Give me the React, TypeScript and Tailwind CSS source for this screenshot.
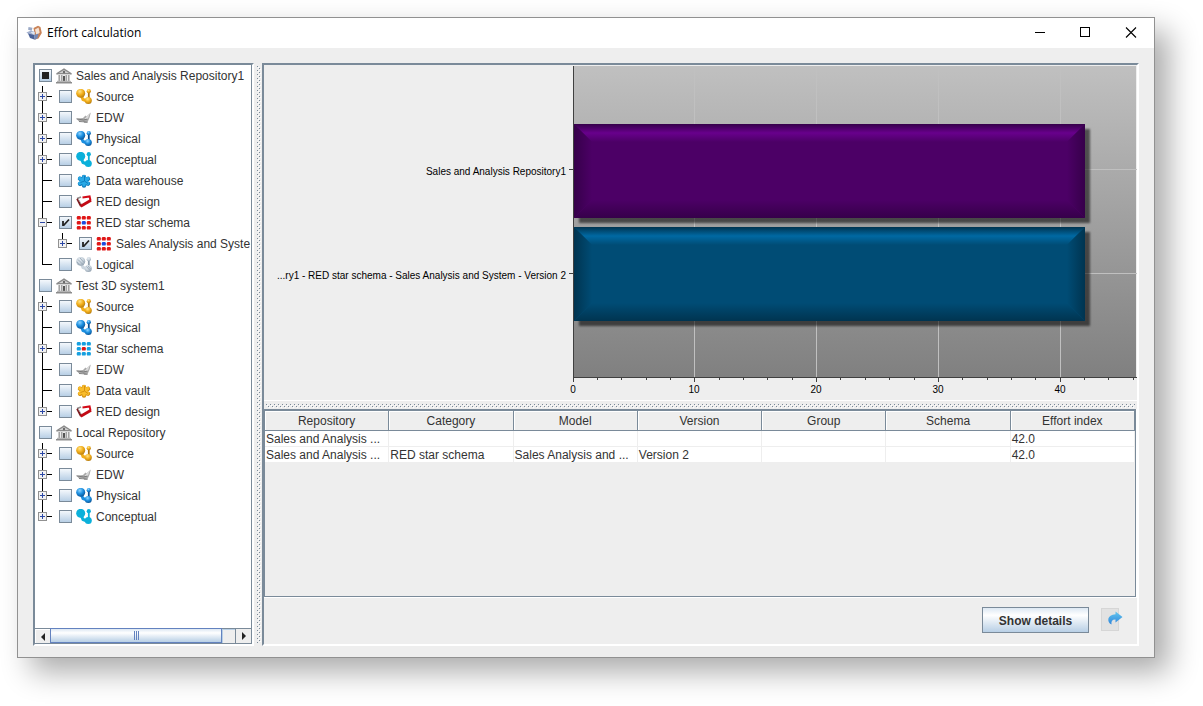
import { useId, useState } from "react";
import type { ReactNode } from "react";

type IconName =
  | "repository"
  | "source"
  | "edw"
  | "physical"
  | "conceptual"
  | "logical"
  | "warehouse"
  | "vault"
  | "red"
  | "redStar"
  | "star";

type TreeRow = {
  label: string;
  icon: IconName;
  level: number;
  expander?: "plus" | "minus";
  last?: boolean;
  state?: "checked" | "partial";
};

const tree: TreeRow[] = [
  { label: "Sales and Analysis Repository1", icon: "repository", level: 0, state: "partial" },
  { label: "Source", icon: "source", level: 1, expander: "plus" },
  { label: "EDW", icon: "edw", level: 1, expander: "plus" },
  { label: "Physical", icon: "physical", level: 1, expander: "plus" },
  { label: "Conceptual", icon: "conceptual", level: 1, expander: "plus" },
  { label: "Data warehouse", icon: "warehouse", level: 1 },
  { label: "RED design", icon: "red", level: 1 },
  { label: "RED star schema", icon: "redStar", level: 1, expander: "minus", state: "checked" },
  { label: "Sales Analysis and Syste", icon: "redStar", level: 2, expander: "plus", last: true, state: "checked" },
  { label: "Logical", icon: "logical", level: 1, last: true },
  { label: "Test 3D system1", icon: "repository", level: 0 },
  { label: "Source", icon: "source", level: 1, expander: "plus" },
  { label: "Physical", icon: "physical", level: 1 },
  { label: "Star schema", icon: "star", level: 1, expander: "plus" },
  { label: "EDW", icon: "edw", level: 1 },
  { label: "Data vault", icon: "vault", level: 1 },
  { label: "RED design", icon: "red", level: 1, expander: "plus", last: true },
  { label: "Local Repository", icon: "repository", level: 0 },
  { label: "Source", icon: "source", level: 1, expander: "plus" },
  { label: "EDW", icon: "edw", level: 1, expander: "plus" },
  { label: "Physical", icon: "physical", level: 1, expander: "plus" },
  { label: "Conceptual", icon: "conceptual", level: 1, expander: "plus", last: true },
];

const columns = ["Repository", "Category", "Model", "Version", "Group", "Schema", "Effort index"];

const rows = [
  ["Sales and Analysis ...", "", "", "", "", "", "42.0"],
  ["Sales and Analysis ...", "RED star schema", "Sales Analysis and ...", "Version 2", "", "", "42.0"],
];

function Molecule({ light, main, dark }: { light: string; main: string; dark: string }) {
  const id = useId();
  return (
    <>
      <defs>
        <radialGradient id={id} cx="0.4" cy="0.3" r="0.75">
          <stop offset="0" stopColor={light} />
          <stop offset="0.5" stopColor={main} />
          <stop offset="1" stopColor={dark} />
        </radialGradient>
      </defs>
      <path d="M5 6l2 4.500 4 1.500" stroke={main} strokeWidth="3" fill="none" />
      <path d="M12.800 2v8" stroke={dark} strokeWidth="1.800" />
      <circle cx="4.700" cy="4.300" r="4.500" fill={`url(#${id})`} />
      <circle cx="12.800" cy="2.200" r="2.100" fill={`url(#${id})`} />
      <circle cx="12.300" cy="11.500" r="3.500" fill={`url(#${id})`} />
    </>
  );
}

function Flower({ main, dark }: { main: string; dark: string }) {
  return (
    <>
      <g stroke={dark} strokeWidth="4.4" strokeLinecap="round">
        <path d="M8 4v8.500M4 5.700l8 5M4 10.800l8-5" />
      </g>
      <g stroke={main} strokeWidth="3.400" strokeLinecap="round">
        <path d="M8 3.600v8.200M3.800 5.400l8 4.800M3.800 10.300l8-4.800" />
      </g>
      <path d="M8.500 3v5l-4 1.500M8.500 8l3.500 2.500" stroke={dark} strokeWidth="0.9" fill="none" />
    </>
  );
}

function DotGrid({ outer, center }: { outer: string; center: string }) {
  const steps = [2.8, 7.8, 12.8];
  return (
    <>
      {steps.map((y) =>
        steps.map((x) => (
          <rect
            key={`${x}-${y}`}
            x={x - 2}
            y={y - 1.8}
            width="4"
            height="3.6"
            rx="1.2"
            fill={x === 7.8 && y === 7.8 ? center : outer}
          />
        ))
      )}
    </>
  );
}

function TreeIcon({ name }: { name: IconName }) {
  let drawing: ReactNode = null;
  switch (name) {
    case "repository":
      drawing = (
        <>
          <path d="M0.300 5.200L8 0.300l7.700 4.900v1.300H0.300z" fill="#8a8a8a" />
          <path d="M3 5L8 2 13 5z" fill="#d2d2d2" />
          <circle cx="8" cy="4" r="1.200" fill="#6a6a6a" />
          <path d="M2 6.500h12v6.500H2z" fill="#ececec" />
          <path d="M3.200 7v6M5.800 7v6M10.200 7v6M12.800 7v6" stroke="#8a8a8a" strokeWidth="1.100" />
          <path d="M7 8h2v5H7z" fill="#555" />
          <path d="M1 12.800h14v1.200H1z" fill="#b5b5b5" />
          <path d="M0 14h16v1.500H0z" fill="#8c8c8c" />
        </>
      );
      break;
    case "source":
      drawing = <Molecule light="#ffe48a" main="#f2ae1a" dark="#b0770e" />;
      break;
    case "physical":
      drawing = <Molecule light="#8fd4ff" main="#1b8fe0" dark="#0a4f90" />;
      break;
    case "conceptual":
      drawing = <Molecule light="#0bb0da" main="#0bb0da" dark="#0bb0da" />;
      break;
    case "logical":
      drawing = (
        <>
          <Molecule light="#e4ebf1" main="#cbd5de" dark="#8f9eac" />
          <path d="M2 2.500l5 5M4 1l4 4.500M1 5l2.500 3M10.500 9.500l3.500 4M12 9l2.500 3" stroke="#8fa0af" strokeWidth="0.800" />
        </>
      );
      break;
    case "edw":
      drawing = (
        <>
          <path d="M0.500 8.800L7 8 9.500 5.500 10.500 6.500 14.800 2.400 13.600 7.500 11.500 12.300 8.500 13 7 11 3 11.500z" fill="#a9a9a9" />
          <path d="M8.500 9l5.500-6-2.200 6z" fill="#dcdcdc" />
          <path d="M0.500 8.800l7 1.200 4-1M3 11.500l5 .3 3.500 .6" stroke="#767676" strokeWidth="0.900" fill="none" />
        </>
      );
      break;
    case "warehouse":
      drawing = <Flower main="#2aa9e6" dark="#0c78b8" />;
      break;
    case "vault":
      drawing = <Flower main="#f9bd2c" dark="#d08c0e" />;
      break;
    case "red":
      drawing = (
        <>
          <path d="M1 4.500L5 3" stroke="#8d8d8d" strokeWidth="1.600" />
          <path d="M1.200 4.800L5 12.300" stroke="#7d1a1f" strokeWidth="2" />
          <path d="M2.200 5L5.800 10.500" stroke="#b5b5b5" strokeWidth="0.900" />
          <path d="M4.700 12.200L15 6.200" stroke="#c20914" strokeWidth="2.800" />
          <path d="M14.500 6.400L13.600 2.400 6.500 3.400" stroke="#d30b18" strokeWidth="2" fill="none" />
        </>
      );
      break;
    case "redStar":
      drawing = <DotGrid outer="#e01818" center="#1c4be0" />;
      break;
    case "star":
      drawing = <DotGrid outer="#16a0e0" center="#e01818" />;
      break;
  }
  return (
    <svg viewBox="0 0 16 16" className="size-4 shrink-0" fill="none" aria-hidden="true">
      {drawing}
    </svg>
  );
}

function Guide({ row }: { row: TreeRow }) {
  return (
    <svg viewBox="0 0 20 21" className="block h-[21px] w-5" shapeRendering="crispEdges" aria-hidden="true">
      <rect x="7" y="0" width="1" height={row.last ? 11 : 21} fill="#000" />
      <rect x="7" y="10" width="10" height="1" fill="#000" />
      {row.expander && (
        <>
          <rect x="3.500" y="6.500" width="8" height="8" fill="#f2f2f2" stroke="#919191" />
          <rect x="5" y="10" width="5" height="1" fill="#2b47a5" />
          {row.expander === "plus" && <rect x="7" y="8" width="1" height="5" fill="#2b47a5" />}
        </>
      )}
    </svg>
  );
}

function TreeItem({ row }: { row: TreeRow }) {
  const [on, setOn] = useState(row.state !== undefined);
  return (
    <li className="flex h-[21px] items-center">
      {row.level === 2 && (
        <svg viewBox="0 0 20 21" className="h-[21px] w-5 shrink-0" shapeRendering="crispEdges" aria-hidden="true">
          <rect x="7" y="0" width="1" height="21" fill="#000" />
        </svg>
      )}
      {row.level > 0 &&
        (row.expander ? (
          <button type="button" className="shrink-0" aria-label={`Toggle ${row.label}`}>
            <Guide row={row} />
          </button>
        ) : (
          <span className="shrink-0">
            <Guide row={row} />
          </span>
        ))}
      <label className="flex items-center gap-1 pl-1 whitespace-nowrap">
        <span className="relative size-[13px] shrink-0">
          <input
            type="checkbox"
            checked={on}
            onChange={(e) => setOn(e.target.checked)}
            className="block size-[13px] appearance-none border border-[#7a8a99] bg-linear-to-b from-[#f4f8fc] to-[#b8cfe5]"
          />
          {on && (
            <svg viewBox="0 0 13 13" className="pointer-events-none absolute inset-0 size-[13px]" aria-hidden="true">
              {row.state === "partial" ? (
                <rect x="3" y="3" width="7" height="7" fill="#222" />
              ) : (
                <path d="M4 5v5M4.500 9.500L10 3.500" stroke="#222" strokeWidth="1.800" fill="none" />
              )}
            </svg>
          )}
        </span>
        <TreeIcon name={row.icon} />
        <span>{row.label}</span>
      </label>
    </li>
  );
}

function Bumps({ className }: { className: string }) {
  const id = useId();
  return (
    <svg className={className} shapeRendering="crispEdges" aria-hidden="true">
      <defs>
        <pattern id={id} width="4" height="4" patternUnits="userSpaceOnUse">
          <rect x="0" y="0" width="1" height="1" fill="#7a8a99" />
          <rect x="1" y="1" width="1" height="1" fill="#fff" />
          <rect x="2" y="2" width="1" height="1" fill="#7a8a99" />
          <rect x="3" y="3" width="1" height="1" fill="#fff" />
        </pattern>
      </defs>
      <rect width="100%" height="100%" fill={`url(#${id})`} />
    </svg>
  );
}

const BAR_HEIGHT = 94;
const BEVEL = 18;
const AXIS_X = 309;

// value on the effort axis -> x in chart units
const scaleX = (value: number) => Math.floor(AXIS_X + value * 12.18);

const bars = [
  {
    label: "Sales and Analysis Repository1",
    value: 42,
    y: 59,
    tick: 104,
    base: "#4c0066",
    bright: "#68008c",
    dark: "#36004a",
  },
  {
    label: "...ry1 - RED star schema - Sales Analysis and System - Version 2",
    value: 42,
    y: 162,
    tick: 208,
    base: "#004c75",
    bright: "#0069a3",
    dark: "#003450",
  },
];

function Bar({ bar }: { bar: (typeof bars)[number] }) {
  const id = useId();
  const x = AXIS_X + 1;
  const right = scaleX(bar.value) + 1;
  const bottom = bar.y + BAR_HEIGHT;
  const { base, bright, dark } = bar;
  return (
    <g>
      <defs>
        <linearGradient id={`${id}t`} x1="0" y1="0" x2="0" y2="1">
          <stop offset="0" stopColor={dark} />
          <stop offset="0.5" stopColor={bright} />
          <stop offset="1" stopColor={base} />
        </linearGradient>
        <linearGradient id={`${id}b`} x1="0" y1="1" x2="0" y2="0">
          <stop offset="0" stopColor={dark} />
          <stop offset="1" stopColor={base} />
        </linearGradient>
        <linearGradient id={`${id}l`} x1="0" y1="0" x2="1" y2="0">
          <stop offset="0" stopColor={dark} />
          <stop offset="1" stopColor={base} />
        </linearGradient>
        <linearGradient id={`${id}r`} x1="1" y1="0" x2="0" y2="0">
          <stop offset="0" stopColor={dark} />
          <stop offset="1" stopColor={base} />
        </linearGradient>
      </defs>
      <rect x={x + 5} y={bar.y + 5} width={right - x} height={BAR_HEIGHT} fill="#000" opacity="0.55" filter="url(#soft)" />
      <rect x={x} y={bar.y} width={right - x} height={BAR_HEIGHT} fill={base} />
      <path d={`M${x} ${bar.y}H${right}L${right - BEVEL} ${bar.y + BEVEL}H${x + BEVEL}Z`} fill={`url(#${id}t)`} />
      <path d={`M${x} ${bottom}H${right}L${right - BEVEL} ${bottom - BEVEL}H${x + BEVEL}Z`} fill={`url(#${id}b)`} />
      <path d={`M${x} ${bar.y}V${bottom}L${x + BEVEL} ${bottom - BEVEL}V${bar.y + BEVEL}Z`} fill={`url(#${id}l)`} />
      <path d={`M${right} ${bar.y}V${bottom}L${right - BEVEL} ${bottom - BEVEL}V${bar.y + BEVEL}Z`} fill={`url(#${id}r)`} />
    </g>
  );
}

function EffortChart() {
  const majors = [0, 10, 20, 30, 40];
  const minors = Array.from({ length: 24 }, (_, i) => i * 2).filter((v) => v % 10 !== 0);
  return (
    <svg viewBox="0 0 873 336" className="block w-full shrink-0" role="img" aria-label="Effort index per model">
      <defs>
        <linearGradient id="plot" x1="0" y1="0" x2="0" y2="1">
          <stop offset="0" stopColor="#c0c0c0" />
          <stop offset="1" stopColor="#808080" />
        </linearGradient>
        <filter id="soft" x="-5%" y="-10%" width="110%" height="125%">
          <feGaussianBlur stdDeviation="1" />
        </filter>
      </defs>
      <rect x="0" y="335" width="873" height="1" fill="#fff" />
      <rect x="310" y="1" width="562" height="311" fill="url(#plot)" />
      <g shapeRendering="crispEdges">
        {majors.slice(1).map((v) => (
          <rect key={v} x={scaleX(v)} y="1" width="1" height="311" fill="#c0c0c0" />
        ))}
        {bars.map((bar) => (
          <rect key={bar.label} x="310" y={bar.tick} width="563" height="1" fill="#c0c0c0" />
        ))}
      </g>
      {bars.map((bar) => (
        <Bar key={bar.label} bar={bar} />
      ))}
      <g shapeRendering="crispEdges" fill="#404040">
        <rect x="309" y="1" width="1" height="312" />
        <rect x="309" y="312" width="564" height="1" />
        {majors.map((v) => (
          <rect key={v} x={scaleX(v)} y="313" width="1" height="4" />
        ))}
        {minors.map((v) => (
          <rect key={v} x={scaleX(v)} y="313" width="1" height="2" />
        ))}
        {bars.map((bar) => (
          <rect key={bar.label} x="305" y={bar.tick} width="4" height="1" />
        ))}
      </g>
      <g fontSize="10" fill="#000">
        {bars.map((bar) => (
          <text key={bar.label} x="302" y={bar.tick + 6} textAnchor="end">
            {bar.label}
          </text>
        ))}
        {majors.map((v) => (
          <text key={v} x={scaleX(v)} y="328" textAnchor="middle">
            {v}
          </text>
        ))}
      </g>
    </svg>
  );
}

function TitleBar() {
  return (
    <header className="flex h-[30px] shrink-0 items-center bg-white pl-2">
      <svg viewBox="0 0 16 16" className="size-4" aria-hidden="true">
        <path d="M7.500 3L12 0.800 14.500 2 15.800 8 12.500 13.500 9 14.500 8.500 9z" fill="#c98358" />
        <path d="M9 4.500l3.500-2 1.200 5-3.200 3z" fill="#f6e3d4" />
        <path d="M2.500 2l4 .8-.8 3-3.600-1z" fill="#9aa9c6" />
        <path d="M0.300 7.500L5 5.500 9 7l-1 3.500-4-.5z" fill="#a4b2d0" />
        <path d="M2 8.500l6 1.500 1 4.800-5-1.800z" fill="#4a6197" />
        <path d="M8 10l4.500-1.500L11.500 13 9 14.800z" fill="#7388b5" />
        <path d="M4.500 7.300l3.500-.8 1 1.500-1.500 1.500z" fill="#dfe5f0" />
      </svg>
      <h1 className="ml-[5px] flex-1 font-['Open_Sans',sans-serif] text-xs text-black">Effort calculation</h1>
      <button type="button" aria-label="Minimize" className="flex h-full w-[46px] items-center justify-center">
        <svg viewBox="0 0 12 12" className="size-3" shapeRendering="crispEdges">
          <rect x="2" y="5" width="10" height="1" />
        </svg>
      </button>
      <button type="button" aria-label="Maximize" className="flex h-full w-[46px] items-center justify-center">
        <svg viewBox="0 0 12 12" className="size-3" shapeRendering="crispEdges">
          <rect x="1.500" y="0.500" width="9" height="9" fill="none" stroke="#000" />
        </svg>
      </button>
      <button type="button" aria-label="Close" className="flex h-full w-[46px] items-center justify-center">
        <svg viewBox="0 0 12 12" className="size-3">
          <path d="M1 0.500l10 10M11 0.500l-10 10" stroke="#000" strokeWidth="1.100" />
        </svg>
      </button>
    </header>
  );
}

function TreeScrollBar() {
  return (
    <div className="flex h-4 shrink-0 border-y border-[#7a8a99]">
      <button type="button" aria-label="Scroll left" className="flex w-[15px] items-center justify-center border-t border-l border-white">
        <svg viewBox="0 0 4 8" className="h-2 w-1" fill="#222">
          <path d="M4 0v8L0 4z" />
        </svg>
      </button>
      <div className="-mt-px flex w-[172px] items-center justify-center gap-px border border-[#6382bf] bg-linear-to-b from-[#dde8f3] via-white via-30% to-[#b8cfe5]">
        <span className="h-[9px] w-px bg-[#6382bf]" />
        <span className="h-[9px] w-px bg-[#6382bf]" />
        <span className="h-[9px] w-px bg-[#6382bf]" />
      </div>
      <div className="flex-1 border-t border-l border-[#b8cfe5]" />
      <button type="button" aria-label="Scroll right" className="flex w-4 items-center justify-center border-l border-[#7a8a99]">
        <svg viewBox="0 0 4 8" className="h-2 w-1" fill="#222">
          <path d="M0 0v8l4-4z" />
        </svg>
      </button>
    </div>
  );
}

function EffortTable() {
  return (
    <div className="flex min-h-0 flex-1 border-r border-white">
      <div className="min-w-0 flex-1 border-t-2 border-r border-b border-l border-[#7a8a99]">
        <table className="w-full table-fixed border-separate border-spacing-0">
          <thead>
            <tr>
              {columns.map((column) => (
                <th
                  key={column}
                  className="h-5 border-r border-b border-[#7a8a99] pt-px font-normal shadow-[inset_1px_1px_0_#fff]"
                >
                  {column}
                </th>
              ))}
            </tr>
          </thead>
          <tbody>
            {rows.map((row, r) => (
              <tr key={r}>
                {row.map((cell, c) => (
                  <td
                    key={c}
                    className="h-4 overflow-hidden border-r border-b border-[#eee] bg-white pt-px pr-0 pb-0 pl-px leading-[14px] whitespace-nowrap"
                  >
                    {cell}
                  </td>
                ))}
              </tr>
            ))}
          </tbody>
        </table>
      </div>
    </div>
  );
}

export default function App() {
  return (
    <div className="flex h-screen bg-white pt-[17px] pr-12 pb-12 pl-[17px] font-['Liberation_Sans',Arial,sans-serif] text-xs text-[#333]">
      <div className="flex min-w-0 flex-1 flex-col border border-[#919191] bg-[#eee] shadow-[14px_14px_28px_rgba(0,0,0,0.33)]">
        <TitleBar />
        <main className="flex min-h-0 flex-1 px-[15px] pt-[15px] pb-[11px]">
          <div className="w-[221px] shrink-0 border-t-2 border-r-2 border-b-2 border-l-2 border-t-[#7a8a99] border-r-white border-b-white border-l-[#7a8a99]">
            <div className="flex h-full flex-col border-r border-[#7a8a99]">
              <ul className="min-h-0 flex-1 overflow-hidden bg-white">
                {tree.map((row, i) => (
                  <TreeItem key={i} row={row} />
                ))}
              </ul>
              <TreeScrollBar />
            </div>
          </div>

          <div className="flex w-2 shrink-0 justify-end py-[3px] pr-px">
            <Bumps className="h-full w-1" />
          </div>

          <div className="flex min-w-0 flex-1 flex-col border-t-2 border-r-2 border-b-2 border-l-2 border-t-[#7a8a99] border-r-white border-b-white border-l-[#7a8a99]">
            <EffortChart />
            <div className="flex h-2 shrink-0 items-end px-0.5 pb-px">
              <Bumps className="h-1 w-full" />
            </div>
            <EffortTable />
            <div className="flex h-[47px] shrink-0 items-start justify-end gap-3 border-t border-white pt-[9px] pr-3.5">
              <button
                type="button"
                className="h-[26px] w-[107px] border border-[#7a8a99] bg-linear-to-b from-[#dde8f3] via-white via-30% to-[#b8cfe5] pt-px font-bold"
              >
                Show details
              </button>
              <button type="button" aria-label="Export">
                <svg viewBox="0 0 22 24" className="block h-6 w-[22px]">
                  <defs>
                    <linearGradient id="arrow" x1="0" y1="0" x2="0" y2="1">
                      <stop offset="0" stopColor="#63c6ee" />
                      <stop offset="1" stopColor="#2f86dc" />
                    </linearGradient>
                  </defs>
                  <rect x="0.500" y="1.500" width="17" height="22" fill="#e2e2e2" stroke="#d6d6d6" />
                  <path
                    d="M14.500 4.500L21.500 10 14.500 15.500V12.500C11.500 12.300 10 14 10.500 17.500 5.500 15 6 7.500 14.500 7.200z"
                    fill="url(#arrow)"
                  />
                </svg>
              </button>
            </div>
          </div>
        </main>
      </div>
    </div>
  );
}
